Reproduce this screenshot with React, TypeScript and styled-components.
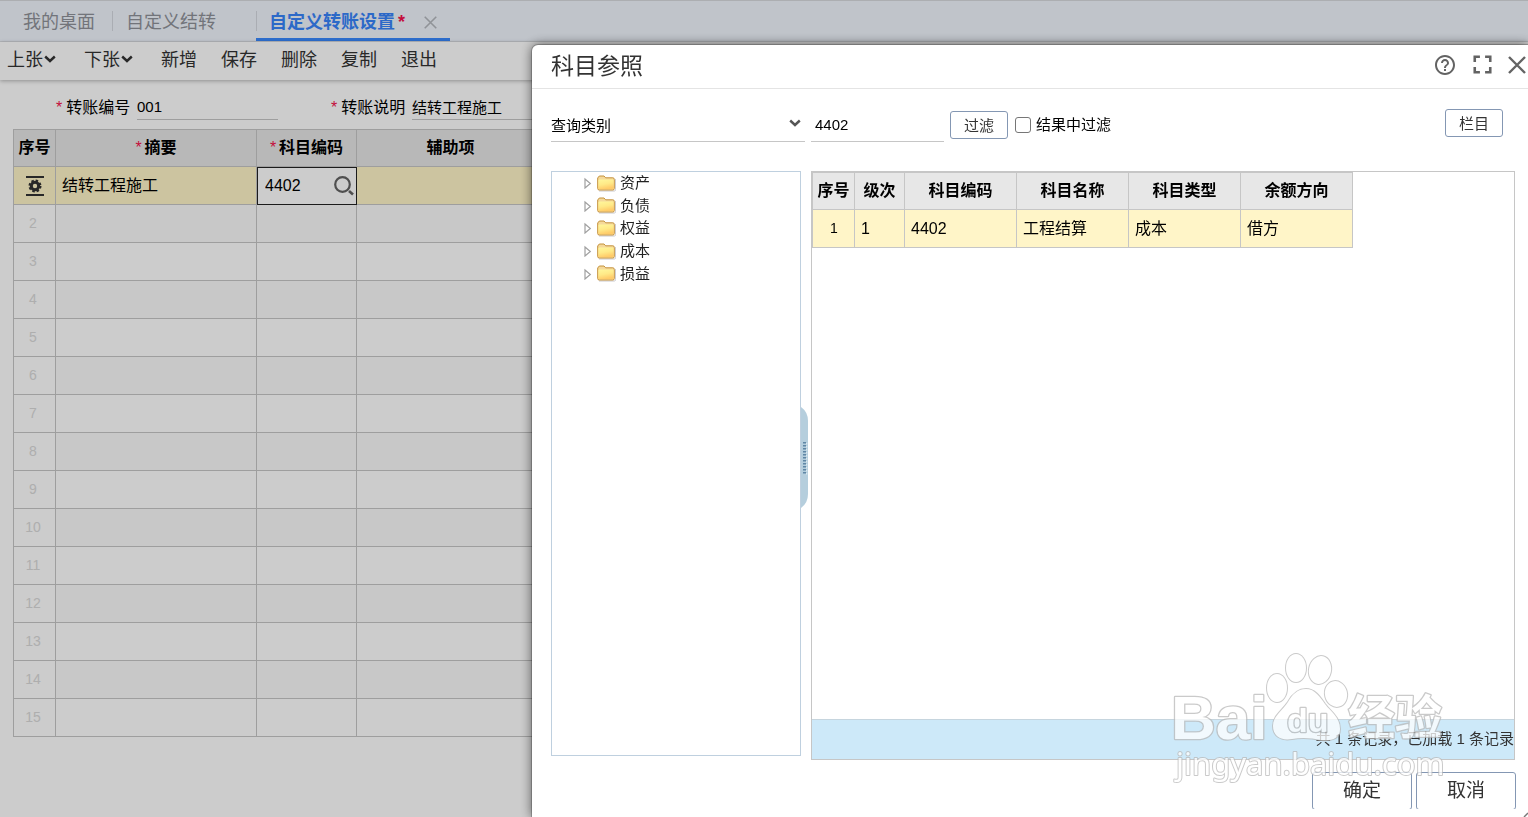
import React, { useState } from "react";
import styled, { createGlobalStyle } from "styled-components";
import { MdHelpOutline, MdFullscreen } from "react-icons/md";

const GlobalStyle = createGlobalStyle`
  *, *::before, *::after { box-sizing: border-box; }
  body {
    margin: 0;
    background: #fff;
    color: #000;
    font-family: "Liberation Sans", "Noto Sans CJK SC", sans-serif;
    font-size: 16px;
  }
  button, input, select { font: inherit; color: inherit; }
`;

const Page = styled.div`
  min-height: 100vh;
  display: flex;
  flex-direction: column;
`;

const TabBar = styled.nav`
  display: flex;
  align-items: stretch;
  height: 42px;
  padding-left: 10px;
  background: #f0f5fd;
  border-top: 1px solid #d8dade;
  border-bottom: 1px solid #e0e3e8;
`;

const Tab = styled.button<{ $active?: boolean; $divided?: boolean }>`
  display: flex;
  align-items: center;
  padding: 2px 13px 0;
  margin-right: ${(p) => (p.$divided ? "27px" : "4px")};
  border: 0;
  border-bottom: 3px solid ${(p) => (p.$active ? "#3989ff" : "transparent")};
  border-top: 3px solid transparent;
  background: none;
  color: ${(p) => (p.$active ? "#3784fb" : "#8f9299")};
  font-size: 18px;
  line-height: 24px;
  font-weight: ${(p) => (p.$active ? 700 : 400)};
  white-space: nowrap;
`;

const TabDivider = styled.span<{ $joined?: boolean }>`
  align-self: center;
  width: 1px;
  height: 20px;
  margin-right: ${(p) => (p.$joined ? "-1px" : "0")};
  background: #d5d9e0;
`;

const TabClose = styled.span`
  display: flex;
  color: #b5b8be;
`;

const Required = styled.span`
  color: #f5114c;
  font-size: 16px;
  font-weight: 400;
  margin-right: 4px;
`;

const DirtyMark = styled.span`
  color: #f5114c;
  margin: 0 19px 0 3px;
`;

const Toolbar = styled.div`
  display: flex;
  align-items: center;
  gap: 24px;
  height: 38px;
  padding: 0 0 2px 7px;
  box-shadow: 0 1px 4px rgba(0, 0, 0, 0.3);
`;

const ToolButton = styled.button<{ $menu?: boolean }>`
  display: flex;
  align-items: center;
  gap: 1px;
  width: ${(p) => (p.$menu ? "53px" : "auto")};
  padding: 0;
  border: 0;
  background: none;
  color: #333;
  font-size: 18px;
  line-height: 26px;
  white-space: nowrap;

  svg { margin-bottom: 3px; }
`;

const HeaderForm = styled.form`
  display: flex;
  gap: 53px;
  padding: 15px 13px 8px 56px;
`;

const Field = styled.div`
  display: flex;
  align-items: flex-start;
`;

const FieldLabel = styled.label`
  width: 81px;
  line-height: 26px;
  white-space: nowrap;
`;

const LineInput = styled.input<{ $width: number; $height: number; $pad?: number }>`
  width: ${(p) => p.$width}px;
  height: ${(p) => p.$height}px;
  padding: 0 ${(p) => p.$pad ?? 0}px 2px;
  border: 0;
  border-bottom: 1px solid #c6c6c6;
  background: none;
  font-size: 15px;
  outline: none;
`;

const Grid = styled.table<{ $fill?: boolean }>`
  ${(p) => (p.$fill ? "margin: 0 13px; width: calc(100% - 26px);" : "width: 541px;")}
  table-layout: fixed;
  border-collapse: separate;
  border-spacing: 0;
  border-top: 1px solid #c6c6c6;
  border-left: 1px solid #c6c6c6;
  line-height: 24px;
`;

const HeadCell = styled.th<{ $width?: number }>`
  width: ${(p) => (p.$width ? `${p.$width}px` : "auto")};
  height: 37px;
  padding: 0;
  background: #e7e7e7;
  border-right: 1px solid #c6c6c6;
  border-bottom: 1px solid #c6c6c6;
  font-weight: 700;
  text-align: center;
  white-space: nowrap;

  ${Required} { margin-right: 3px; }
`;

const Cell = styled.td<{ $bg?: string; $center?: boolean; $faint?: boolean }>`
  height: 38px;
  padding: ${(p) => (p.$faint ? "0 3px 2px 0" : p.$center ? "0 0 2px 1px" : "0 6px")};
  background: ${(p) => p.$bg ?? "#fff"};
  border-right: 1px solid #c6c6c6;
  border-bottom: 1px solid #c6c6c6;
  text-align: ${(p) => (p.$center ? "center" : "left")};
  color: ${(p) => (p.$faint ? "#dadada" : "#000")};
  font-size: ${(p) => (p.$center ? "14px" : "16px")};

  svg { vertical-align: middle; }
`;

const EditCell = styled.td`
  height: 38px;
  padding: 0;
  background: #fff;
  outline: 1px solid #222;
  outline-offset: -1px;
`;

const EditBox = styled.div`
  display: flex;
  align-items: center;
  padding: 0 2px 0 8px;

  input {
    flex: 1;
    min-width: 0;
    padding: 0;
    border: 0;
    outline: none;
    background: none;
  }
`;

const IconButton = styled.button`
  display: flex;
  padding: 0;
  border: 0;
  background: none;
  color: #636363;
`;

const Shade = styled.div`
  position: fixed;
  inset: 0;
  background: rgba(0, 0, 0, 0.2);
`;

const Dialog = styled.section`
  position: fixed;
  top: 45px;
  left: 532px;
  right: 0;
  bottom: 0;
  display: flex;
  flex-direction: column;
  background: #fff;
  border-radius: 6px 0 0 0;
  box-shadow: 0 0 0 1px rgba(0, 0, 0, 0.2), 0 0 12px rgba(0, 0, 0, 0.6);
`;

const DialogHeader = styled.header`
  display: flex;
  align-items: center;
  justify-content: space-between;
  height: 44px;
  padding: 0 2px 4px 19px;
  border-bottom: 1px solid #e4e4e4;
`;

const DialogTitle = styled.h1`
  margin: 0;
  padding-top: 2px;
  color: #333;
  font-size: 23px;
  line-height: 32px;
  font-weight: 400;
`;

const WindowActions = styled.div`
  display: flex;
  align-items: center;
  gap: 10px;
`;

const FilterRow = styled.form`
  display: flex;
  align-items: flex-end;
  gap: 6px;
  padding: 19px 25px 0 19px;
  font-size: 15px;
`;

const SelectWrap = styled.div`
  position: relative;
  width: 254px;

  select {
    display: block;
    width: 100%;
    height: 33px;
    padding: 0;
    border: 0;
    border-bottom: 1px solid #c6c6c6;
    border-radius: 0;
    appearance: none;
    background: none;
    outline: none;
  }

  svg {
    position: absolute;
    right: 4px;
    top: 8px;
    pointer-events: none;
    color: #555;
  }
`;

const OutlineButton = styled.button<{ $push?: boolean }>`
  width: 58px;
  height: 28px;
  padding: 1px 0 0;
  margin-left: ${(p) => (p.$push ? "auto" : "0")};
  margin-bottom: ${(p) => (p.$push ? "5px" : "3px")};
  border: 1px solid #8497b3;
  border-radius: 3px;
  background: #fff;
  color: #333;
  font-size: 15px;
  line-height: 24px;
`;

const CheckLabel = styled.label`
  display: flex;
  align-items: center;
  gap: 5px;
  height: 34px;
  padding-left: 1px;
  line-height: 22px;

  input {
    width: 16px;
    height: 16px;
    margin: 0;
    appearance: none;
    border: 1px solid #767676;
    border-radius: 3px;
    background: #fff;
  }
  input:checked { background: #3989ff; }
`;

const Panels = styled.div`
  flex: 1;
  min-height: 0;
  display: flex;
  padding: 29px 13px 0 19px;
`;

const TreePanel = styled.aside`
  width: 250px;
  margin-bottom: 4px;
  border: 1px solid #bfd0df;
`;

const Tree = styled.ul`
  display: flex;
  flex-direction: column;
  height: 113px;
  margin: 0;
  padding: 0 0 0 31px;
  list-style: none;
`;

const TreeItem = styled.li`
  flex: 1;
  display: flex;
  align-items: center;
  color: #222;
  font-size: 15px;
  line-height: 22px;

  svg { margin-right: 4px; }
`;

const Splitter = styled.div`
  display: flex;
  align-items: center;
  width: 10px;
  padding-bottom: 17px;
`;

const ResultPanel = styled.div`
  flex: 1;
  min-width: 0;
  display: flex;
  flex-direction: column;
  justify-content: space-between;
  border: 1px solid #c6c6c6;
`;

const StatusBar = styled.div`
  height: 40px;
  border-top: 1px solid #c6d5de;
  background: #cde9f9;
  color: #333;
  font-size: 15px;
  line-height: 38px;
  text-align: right;
`;

const Actions = styled.footer`
  display: flex;
  justify-content: flex-end;
  gap: 4px;
  height: 37px;
  margin: 12px 12px 8px 0;
  overflow: hidden;
`;

const ActionButton = styled.button`
  width: 100px;
  height: 38px;
  padding: 0;
  border: 1px solid #8497b3;
  border-radius: 3px;
  background: #fff;
  color: #333;
  font-size: 19px;
  line-height: 26px;
`;

const ResizeGrip = styled.svg`
  position: absolute;
  right: 0;
  bottom: 0;
  color: #777;
`;

const Watermark = styled.svg`
  position: absolute;
  right: 78px;
  bottom: 27px;
  pointer-events: none;
`;

const Chevron = () => (
  <svg width="12" height="12" viewBox="0 0 12 12" fill="none" stroke="currentColor" strokeWidth="2.4" aria-hidden="true">
    <path d="M1.2 3.5 L6 8 L10.8 3.5" />
  </svg>
);

const CloseIcon = ({ size, weight }: { size: number; weight: number }) => (
  <svg width={size} height={size} viewBox="0 0 18 18" fill="none" stroke="currentColor" strokeWidth={weight} aria-hidden="true">
    <path d="M1 1 L17 17 M17 1 L1 17" />
  </svg>
);

const SearchIcon = () => (
  <svg width="22" height="22" viewBox="0 0 22 22" fill="none" stroke="currentColor" aria-hidden="true">
    <circle cx="9.5" cy="9.5" r="7.3" strokeWidth="2.2" />
    <path d="M16 16 L20 19.5" strokeWidth="2.6" />
  </svg>
);

const RowSettingsIcon = () => (
  <svg width="18" height="20" viewBox="0 0 18 20" aria-hidden="true">
    <path d="M0 1 H18 M0 19 H18" stroke="#333" strokeWidth="2" />
    <circle cx="9" cy="10" r="3.7" fill="none" stroke="#333" strokeWidth="3" />
    <circle cx="9" cy="10" r="5.4" fill="none" stroke="#333" strokeWidth="2.2" strokeDasharray="2.4 1.841" />
  </svg>
);

const FolderIcon = () => (
  <svg width="19" height="17" viewBox="0 0 19 17" aria-hidden="true">
    <defs>
      <linearGradient id="folderFill" x1="0" y1="0" x2="0.3" y2="1">
        <stop offset="0" stopColor="#fff79c" />
        <stop offset="0.55" stopColor="#ffe987" />
        <stop offset="1" stopColor="#ffcb69" />
      </linearGradient>
    </defs>
    <path d="M2 16 H17.5 Q18.6 16 18.6 14.5 V4" fill="none" stroke="#c9c9cf" />
    <path d="M0.7 13.5 V3 L2.3 1 H7 L8.7 2.8 H15.8 Q17.3 2.8 17.3 4.4 V13.5 Q17.3 15 15.8 15 H2.2 Q0.7 15 0.7 13.5 Z" fill="#f5d99a" stroke="#c4923c" />
    <path d="M1.4 5.5 Q1.4 4.5 2.6 4.5 H15.5 Q16.6 4.5 16.6 5.5 V13.2 Q16.6 14.3 15.5 14.3 H2.5 Q1.4 14.3 1.4 13.2 Z" fill="url(#folderFill)" />
  </svg>
);

const ExpandIcon = () => (
  <svg width="10" height="12" viewBox="0 0 10 12" fill="#fff" stroke="#a0a0a0" strokeWidth="1.2" aria-hidden="true">
    <path d="M2 2 L7.3 6.5 L2 11 Z" />
  </svg>
);

const SplitHandle = () => (
  <svg width="8" height="101" viewBox="0 0 8 101" aria-hidden="true">
    <path d="M0 0 Q7 5 7 14 V87 Q7 96 0 101 Z" fill="#b5cedd" />
    <path d="M3.5 35 V68" stroke="#5f86a5" strokeWidth="3" strokeDasharray="1.5 1.5" />
    <path d="M5.7 36 V68" stroke="#e3edf3" strokeWidth="1" strokeDasharray="1.5 1.5" />
  </svg>
);

const pawToes = [
  { cx: 107, cy: 38, rx: 10, ry: 14, turn: 0 },
  { cx: 126, cy: 18, rx: 10, ry: 14, turn: 0 },
  { cx: 150, cy: 20, rx: 11, ry: 14, turn: 12 },
  { cx: 166, cy: 44, rx: 11, ry: 13, turn: -14 },
];

const BaiduWatermark = () => (
  <Watermark width="280" height="140" viewBox="0 0 280 140" aria-hidden="true">
    <g fill="#fff" stroke="#b9b9b9" strokeLinejoin="round" paintOrder="stroke" opacity="0.75">
      <g strokeWidth="2">
        {pawToes.map((t) => (
          <ellipse key={t.cx} cx={t.cx} cy={t.cy} rx={t.rx} ry={t.ry} transform={`rotate(${t.turn} ${t.cx} ${t.cy})`} />
        ))}
        <path d="M136 39 C145 39 150 47 155 54 C161 62 170 67 170 79 C170 89 161 91 151 90 C142 88 132 87 122 89 C111 91 103 86 103 76 C103 66 112 61 118 52 C122 45 127 39 136 39 Z" />
      </g>
      <g strokeWidth="2.6">
        <text x="1" y="89" fontFamily="Liberation Sans, sans-serif" fontWeight="700" fontSize="62">Bai</text>
        <text x="117" y="82" fontFamily="Liberation Sans, sans-serif" fontWeight="700" fontSize="34">du</text>
        <text x="178" y="84" fontFamily="Noto Sans CJK SC, sans-serif" fontWeight="700" fontSize="47">经验</text>
        <text x="6" y="125" fontFamily="Noto Sans, sans-serif" fontSize="31" strokeWidth="2">jingyan.baidu.com</text>
      </g>
    </g>
  </Watermark>
);

const toolItems = ["新增", "保存", "删除", "复制", "退出"];
const emptyRows = Array.from({ length: 14 }, (_, i) => i + 2);
const treeItems = ["资产", "负债", "权益", "成本", "损益"];
const resultColumns = [
  { title: "序号", width: 42 },
  { title: "级次", width: 50 },
  { title: "科目编码", width: 112 },
  { title: "科目名称", width: 112 },
  { title: "科目类型", width: 112 },
  { title: "余额方向", width: 112 },
];
const resultRow = ["1", "4402", "工程结算", "成本", "借方"];
const HIGHLIGHT = "#fff5c8";

export default function App() {
  const [keyword, setKeyword] = useState("4402");
  const [within, setWithin] = useState(false);

  return (
    <>
      <GlobalStyle />
      <Page>
        <TabBar>
          <Tab type="button">我的桌面</Tab>
          <TabDivider />
          <Tab type="button" $divided>自定义结转</Tab>
          <TabDivider $joined />
          <Tab type="button" $active>
            自定义转账设置
            <DirtyMark>*</DirtyMark>
            <TabClose>
              <CloseIcon size={13} weight={2.2} />
            </TabClose>
          </Tab>
        </TabBar>
        <Toolbar>
          <ToolButton type="button" $menu>上张<Chevron /></ToolButton>
          <ToolButton type="button" $menu>下张<Chevron /></ToolButton>
          {toolItems.map((t) => (
            <ToolButton type="button" key={t}>{t}</ToolButton>
          ))}
        </Toolbar>
        <HeaderForm>
          <Field>
            <FieldLabel htmlFor="code"><Required>*</Required>转账编号</FieldLabel>
            <LineInput id="code" defaultValue="001" $width={141} $height={25} />
          </Field>
          <Field>
            <FieldLabel htmlFor="note"><Required>*</Required>转账说明</FieldLabel>
            <LineInput id="note" defaultValue="结转工程施工" $width={141} $height={25} />
          </Field>
        </HeaderForm>
        <Grid $fill>
          <thead>
            <tr>
              <HeadCell $width={42}>序号</HeadCell>
              <HeadCell $width={201}><Required>*</Required>摘要</HeadCell>
              <HeadCell $width={100}><Required>*</Required>科目编码</HeadCell>
              <HeadCell $width={188}>辅助项</HeadCell>
              <HeadCell />
            </tr>
          </thead>
          <tbody>
            <tr>
              <Cell $center $bg={HIGHLIGHT}><RowSettingsIcon /></Cell>
              <Cell $bg={HIGHLIGHT}>结转工程施工</Cell>
              <EditCell>
                <EditBox>
                  <input aria-label="科目编码" defaultValue="4402" />
                  <IconButton type="button" aria-label="查找"><SearchIcon /></IconButton>
                </EditBox>
              </EditCell>
              <Cell $bg={HIGHLIGHT} />
              <Cell $bg={HIGHLIGHT} />
            </tr>
            {emptyRows.map((n) => {
              const bg = n % 2 === 0 ? "#fafafa" : "#fff";
              return (
                <tr key={n}>
                  <Cell $center $faint>{n}</Cell>
                  <Cell $bg={bg} />
                  <Cell $bg={bg} />
                  <Cell $bg={bg} />
                  <Cell $bg={bg} />
                </tr>
              );
            })}
          </tbody>
        </Grid>
      </Page>

      <Shade />

      <Dialog role="dialog" aria-labelledby="dialog-title">
        <DialogHeader>
          <DialogTitle id="dialog-title">科目参照</DialogTitle>
          <WindowActions>
            <IconButton type="button" aria-label="帮助"><MdHelpOutline size={24} /></IconButton>
            <IconButton type="button" aria-label="最大化"><MdFullscreen size={31} /></IconButton>
            <IconButton type="button" aria-label="关闭"><CloseIcon size={18} weight={2.4} /></IconButton>
          </WindowActions>
        </DialogHeader>
        <FilterRow onSubmit={(e) => e.preventDefault()}>
          <SelectWrap>
            <select aria-label="查询类别" defaultValue="all">
              <option value="all">查询类别</option>
            </select>
            <Chevron />
          </SelectWrap>
          <LineInput
            aria-label="关键字"
            value={keyword}
            onChange={(e) => setKeyword(e.target.value)}
            $width={133}
            $height={33}
            $pad={4}
          />
          <OutlineButton type="submit">过滤</OutlineButton>
          <CheckLabel>
            <input type="checkbox" checked={within} onChange={(e) => setWithin(e.target.checked)} />
            结果中过滤
          </CheckLabel>
          <OutlineButton type="button" $push>栏目</OutlineButton>
        </FilterRow>
        <Panels>
          <TreePanel>
            <Tree>
              {treeItems.map((t) => (
                <TreeItem key={t}>
                  <ExpandIcon />
                  <FolderIcon />
                  {t}
                </TreeItem>
              ))}
            </Tree>
          </TreePanel>
          <Splitter><SplitHandle /></Splitter>
          <ResultPanel>
            <Grid>
              <thead>
                <tr>
                  {resultColumns.map((c) => (
                    <HeadCell key={c.title} $width={c.width}>{c.title}</HeadCell>
                  ))}
                </tr>
              </thead>
              <tbody>
                <tr>
                  <Cell $center $bg={HIGHLIGHT}>1</Cell>
                  {resultRow.map((v, i) => (
                    <Cell key={i} $bg={HIGHLIGHT}>{v}</Cell>
                  ))}
                </tr>
              </tbody>
            </Grid>
            <StatusBar>共 1 条记录，已加载 1 条记录</StatusBar>
          </ResultPanel>
        </Panels>
        <Actions>
          <ActionButton type="button">确定</ActionButton>
          <ActionButton type="button">取消</ActionButton>
        </Actions>
        <ResizeGrip width="5" height="5" viewBox="0 0 5 5" aria-hidden="true">
          <path d="M1 5 L5 1" stroke="currentColor" strokeWidth="1.4" />
        </ResizeGrip>
        <BaiduWatermark />
      </Dialog>
    </>
  );
}
